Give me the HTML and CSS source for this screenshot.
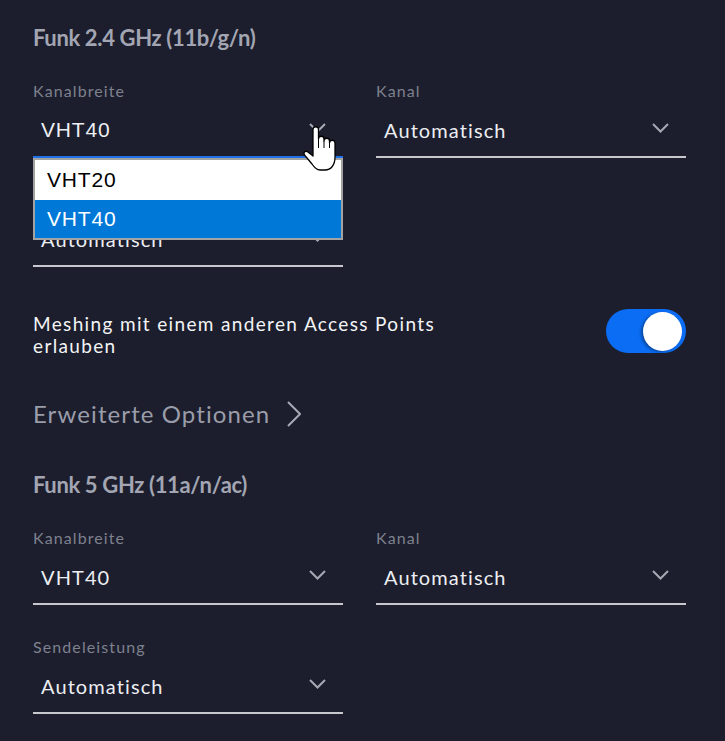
FILE: index.html
```html
<!DOCTYPE html>
<html lang="de">
<head>
<meta charset="utf-8">
<title>Funk</title>
<link rel="stylesheet" href="styles.css">
</head>
<body>
<div class="page">
  <section class="radio">
    <h2 class="title">Funk 2.4 GHz (11b/g/n)</h2>
    <div class="grid">
      <div class="field open">
        <div class="label">Kanalbreite</div>
        <div class="select active native">
          <span class="value">VHT40</span>
          <svg class="chev" viewBox="0 0 17 10"><path d="M1 1 L8.5 8.5 L16 1" /></svg>
        </div>
        <ul class="dropdown">
          <li class="option">VHT20</li>
          <li class="option selected">VHT40</li>
        </ul>
        <svg class="cursor" viewBox="0 0 34 46" width="34" height="46">
          <path class="hand" d="M10,3.5 a2.75,2.75 0 0 1 5.5,0 V13 a2.75,2.75 0 0 1 5.5,0 V15 a2.75,2.75 0 0 1 5.5,0 V17 a2.75,2.75 0 0 1 5.5,0 V31 c0,8 -4,13 -10,13 h-5 c-4,0 -6,-3 -8,-6 L1.5,29 c-1.5,-2.5 1,-5 3.5,-3 L10,30 Z"/>
          <path class="hand-lines" d="M15.5 13 V22 M21 15 V22 M26.5 17 V22"/>
        </svg>
      </div>
      <div class="field">
        <div class="label">Kanal</div>
        <div class="select">
          <span class="value">Automatisch</span>
          <svg class="chev" viewBox="0 0 17 10"><path d="M1 1 L8.5 8.5 L16 1" /></svg>
        </div>
      </div>
      <div class="field">
        <div class="label">Sendeleistung</div>
        <div class="select">
          <span class="value">Automatisch</span>
          <svg class="chev" viewBox="0 0 17 10"><path d="M1 1 L8.5 8.5 L16 1" /></svg>
        </div>
      </div>
    </div>
  </section>

  <div class="mesh-row">
    <p class="mesh-text">Meshing mit einem anderen Access Points erlauben</p>
    <div class="toggle on"><span class="knob"></span></div>
  </div>

  <div class="advanced">
    <span>Erweiterte Optionen</span>
    <svg class="chev-right" viewBox="0 0 14 26"><path d="M1 1 L13 13 L1 25" /></svg>
  </div>

  <section class="radio second">
    <h2 class="title">Funk 5 GHz (11a/n/ac)</h2>
    <div class="grid">
      <div class="field">
        <div class="label">Kanalbreite</div>
        <div class="select">
          <span class="value">VHT40</span>
          <svg class="chev" viewBox="0 0 17 10"><path d="M1 1 L8.5 8.5 L16 1" /></svg>
        </div>
      </div>
      <div class="field">
        <div class="label">Kanal</div>
        <div class="select">
          <span class="value">Automatisch</span>
          <svg class="chev" viewBox="0 0 17 10"><path d="M1 1 L8.5 8.5 L16 1" /></svg>
        </div>
      </div>
      <div class="field">
        <div class="label">Sendeleistung</div>
        <div class="select">
          <span class="value">Automatisch</span>
          <svg class="chev" viewBox="0 0 17 10"><path d="M1 1 L8.5 8.5 L16 1" /></svg>
        </div>
      </div>
    </div>
  </section>
</div>
</body>
</html>
```

FILE: styles.css
```css
* {
  box-sizing: border-box;
  margin: 0;
  padding: 0;
}

html, body {
  background: #1c1e2d;
}

body {
  font-family: Lato, "Open Sans", sans-serif;
  width: 725px;
  height: 741px;
  overflow: hidden;
}

.page {
  padding: 24px 39px 0 33px;
}

.title {
  font-size: 22px;
  font-weight: 700;
  line-height: 28px;
  letter-spacing: -0.35px;
  color: #a3a6b2;
  margin-bottom: 29px;
}

.second {
  margin-top: 43px;
}

.grid {
  display: grid;
  grid-template-columns: 310px 310px;
  column-gap: 33px;
  row-gap: 32px;
}

.field {
  position: relative;
}

.label {
  font-size: 16px;
  line-height: 20px;
  letter-spacing: 1.1px;
  color: #7e818e;
}

.select {
  display: flex;
  align-items: center;
  justify-content: space-between;
  padding: 17px 17px 14px 8px;
  border-bottom: 2px solid #c6c8ce;
  font-size: 20px;
  line-height: 24px;
  letter-spacing: 1.1px;
  color: #eceef2;
}

.select.active {
  border-bottom-color: #1f72e6;
}

.select.native .value {
  font-family: "Liberation Sans", Arial, sans-serif;
  font-size: 21px;
  letter-spacing: 0.8px;
}

.chev {
  width: 17px;
  height: 10px;
  margin-bottom: 5px;
}

.chev path,
.chev-right path {
  fill: none;
  stroke: #a6a9b3;
  stroke-width: 2;
}

.dropdown {
  position: absolute;
  z-index: 5;
  top: 77px;
  left: 0;
  width: 310px;
  list-style: none;
  border: 2px solid #a3a3a3;
  background: #ffffff;
  font-family: "Liberation Sans", Arial, sans-serif;
  font-size: 21px;
  letter-spacing: 0.8px;
}

.option {
  padding-left: 12px;
  height: 40px;
  line-height: 40px;
  color: #000000;
}

.option.selected {
  height: 38px;
  line-height: 38px;
  background: #0078d7;
  color: #ffffff;
}

.cursor {
  position: absolute;
  z-index: 6;
  left: 270px;
  top: 45px;
}

.hand {
  fill: #ffffff;
  stroke: #000000;
  stroke-width: 1.3;
  stroke-linejoin: round;
}

.hand-lines {
  fill: none;
  stroke: #000000;
  stroke-width: 1;
}

.mesh-row {
  margin-top: 42px;
  display: flex;
  justify-content: space-between;
  align-items: flex-start;
  height: 44px;
}

.mesh-text {
  max-width: 440px;
  padding-top: 4px;
  font-size: 19px;
  line-height: 22px;
  letter-spacing: 1.35px;
  color: #f3f4f6;
}

.toggle {
  position: relative;
  width: 80px;
  height: 44px;
  border-radius: 22px;
  background: #0b6df4;
}

.knob {
  position: absolute;
  top: 3px;
  right: 4px;
  width: 39px;
  height: 39px;
  border-radius: 50%;
  background: #ffffff;
  box-shadow: -2px 1px 3px rgba(0, 0, 0, 0.35);
}

.advanced {
  margin-top: 47px;
  display: flex;
  align-items: center;
  gap: 17px;
  font-size: 24px;
  line-height: 28px;
  letter-spacing: 1.1px;
  color: #9a9da9;
}

.chev-right {
  width: 14px;
  height: 26px;
}
```
